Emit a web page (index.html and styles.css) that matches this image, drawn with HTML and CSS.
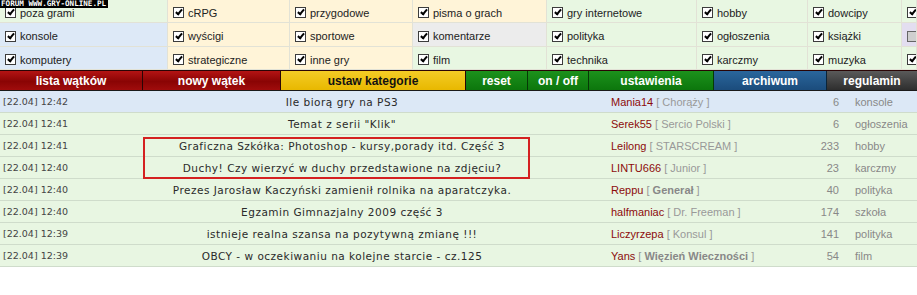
FILE: index.html
```html
<!DOCTYPE html>
<html lang="pl">

<head>
  <meta charset="UTF-8">
  <title>Forum - lista wątków</title>
  <link rel="stylesheet" href="styles.css">
</head>

<body>

  <div class="watermark">FORUM WWW.GRY-ONLINE.PL</div>

  <div class="cats">
    <label class="cat green"><span class="cb"></span>poza grami</label>
    <label class="cat cream"><span class="cb"></span>cRPG</label>
    <label class="cat cream"><span class="cb"></span>przygodowe</label>
    <label class="cat cream"><span class="cb"></span>pisma o grach</label>
    <label class="cat green"><span class="cb"></span>gry internetowe</label>
    <label class="cat green"><span class="cb"></span>hobby</label>
    <label class="cat green"><span class="cb"></span>dowcipy</label>
    <label class="cat green"><span class="cb"></span></label>

    <label class="cat blue"><span class="cb"></span>konsole</label>
    <label class="cat cream"><span class="cb"></span>wyścigi</label>
    <label class="cat cream"><span class="cb"></span>sportowe</label>
    <label class="cat gray"><span class="cb"></span>komentarze</label>
    <label class="cat green"><span class="cb"></span>polityka</label>
    <label class="cat green"><span class="cb"></span>ogłoszenia</label>
    <label class="cat green"><span class="cb"></span>książki</label>
    <label class="cat lilac"><span class="cb off"></span></label>

    <label class="cat blue"><span class="cb"></span>komputery</label>
    <label class="cat cream"><span class="cb"></span>strategiczne</label>
    <label class="cat cream"><span class="cb"></span>inne gry</label>
    <label class="cat green"><span class="cb"></span>film</label>
    <label class="cat green"><span class="cb"></span>technika</label>
    <label class="cat green"><span class="cb"></span>karczmy</label>
    <label class="cat green"><span class="cb"></span>muzyka</label>
    <label class="cat green"><span class="cb"></span></label>
  </div>

  <nav class="menu">
    <a href="#" class="red">lista wątków</a>
    <a href="#" class="red">nowy wątek</a>
    <a href="#" class="yellow">ustaw kategorie</a>
    <a href="#" class="grn">reset</a>
    <a href="#" class="grn">on / off</a>
    <a href="#" class="grn">ustawienia</a>
    <a href="#" class="navy">archiwum</a>
    <a href="#" class="dark">regulamin</a>
  </nav>

  <div class="threads">
    <div class="row first">
      <span class="date">[22.04] 12:42</span>
      <a href="#" class="title">Ile biorą gry na PS3</a>
      <span class="author"><a href="#">Mania14</a> [ Chorąży ]</span>
      <span class="count">6</span>
      <span class="section">konsole</span>
    </div>
    <div class="row">
      <span class="date">[22.04] 12:41</span>
      <a href="#" class="title">Temat z serii "Klik"</a>
      <span class="author"><a href="#">Serek55</a> [ Sercio Polski ]</span>
      <span class="count">6</span>
      <span class="section">ogłoszenia</span>
    </div>
    <div class="row">
      <span class="date">[22.04] 12:41</span>
      <a href="#" class="title">Graficzna Szkółka: Photoshop - kursy,porady itd. Część 3</a>
      <span class="author"><a href="#">Leilong</a> [ STARSCREAM ]</span>
      <span class="count">233</span>
      <span class="section">hobby</span>
    </div>
    <div class="row">
      <span class="date">[22.04] 12:40</span>
      <a href="#" class="title">Duchy! Czy wierzyć w duchy przedstawione na zdjęciu?</a>
      <span class="author"><a href="#">LINTU666</a> [ Junior ]</span>
      <span class="count">23</span>
      <span class="section">karczmy</span>
    </div>
    <div class="row">
      <span class="date">[22.04] 12:40</span>
      <a href="#" class="title">Prezes Jarosław Kaczyński zamienił rolnika na aparatczyka.</a>
      <span class="author"><a href="#">Reppu</a> [ <b>Generał</b> ]</span>
      <span class="count">40</span>
      <span class="section">polityka</span>
    </div>
    <div class="row">
      <span class="date">[22.04] 12:40</span>
      <a href="#" class="title">Egzamin Gimnazjalny 2009 część 3</a>
      <span class="author"><a href="#">halfmaniac</a> [ Dr. Freeman ]</span>
      <span class="count">174</span>
      <span class="section">szkoła</span>
    </div>
    <div class="row">
      <span class="date">[22.04] 12:39</span>
      <a href="#" class="title">istnieje realna szansa na pozytywną zmianę !!!</a>
      <span class="author"><a href="#">Liczyrzepa</a> [ Konsul ]</span>
      <span class="count">141</span>
      <span class="section">polityka</span>
    </div>
    <div class="row">
      <span class="date">[22.04] 12:39</span>
      <a href="#" class="title">OBCY - w oczekiwaniu na kolejne starcie - cz.125</a>
      <span class="author"><a href="#">Yans</a> [ <b>Więzień Wieczności</b> ]</span>
      <span class="count">54</span>
      <span class="section">film</span>
    </div>
  </div>

  <div class="highlight"></div>

</body>

</html>
```

FILE: styles.css
```css
body {
  margin: 0;
  padding: 0;
  background-color: #fff;
  font-family: "Liberation Sans", Arial, sans-serif;
  color: #222;
  position: relative;
}

.watermark {
  position: absolute;
  top: 0;
  left: 0;
  z-index: 2;
  background-color: #000;
  color: #fff;
  font-family: "DejaVu Sans Mono", monospace;
  font-weight: bold;
  font-size: 7.6px;
  line-height: 8px;
  height: 8px;
  padding: 0 2px 0 1px;
}

.cats {
  display: grid;
  grid-template-columns: 168px 122px 123px 134px 150px 111px 94px 15px;
  grid-template-rows: 23px 24px 23px;
}
.cat {
  display: flex;
  align-items: center;
  gap: 4px;
  padding: 3px 0 0 5px;
  font-size: 11px;
  border-right: 1px solid #e2e2d6;
  border-bottom: 1px solid #e2e2d6;
  box-sizing: border-box;
  white-space: nowrap;
  overflow: hidden;
}
.green { background-color: #e8f7e2; }
.cream { background-color: #fff4d8; }
.blue { background-color: #dde9f7; }
.gray { background-color: #ececec; }
.lilac { background-color: #e3def0; }

.cb {
  position: relative;
  flex: none;
  width: 11px;
  height: 11px;
  box-sizing: border-box;
  border: 1px solid #3c3c3c;
  background-color: #fff;
}
.cb::after {
  content: "";
  position: absolute;
  left: 3px;
  top: 0;
  width: 2px;
  height: 5px;
  border: solid #000;
  border-width: 0 2px 2px 0;
  transform: rotate(40deg);
}
.cb.off {
  background-color: #cfcfcf;
  border-color: #666;
}
.cb.off::after {
  display: none;
}

.menu {
  display: grid;
  grid-template-columns: 143px 138px 185px 62px 61px 125px 113px 90px;
  height: 21px;
  box-sizing: border-box;
  border-top: 1px solid #2a0505;
  border-bottom: 1px solid #1a1a1a;
}
.menu a {
  display: flex;
  align-items: center;
  justify-content: center;
  color: #fff;
  font-weight: bold;
  font-size: 12px;
  text-decoration: none;
  border-right: 1px solid #2a0505;
}
.menu a:last-child {
  border-right: none;
}
.menu .red { background: linear-gradient(#b41414, #8a0404 55%, #a00c0c); }
.menu .yellow { background: linear-gradient(#f4cc26, #e8b800); color: #111; }
.menu .grn { background: linear-gradient(#1c921c, #0c760c); border-right-color: #063806; }
.menu .navy { background: linear-gradient(#2a669c, #1b4c7c); border-right-color: #0a2438; }
.menu .dark { background: linear-gradient(#5a5a5a, #2e2e2e); }

.threads {
  font-size: 11px;
}
.row {
  display: grid;
  grid-template-columns: 76px 532px 190px 41px 1fr;
  align-items: center;
  height: 22px;
  box-sizing: border-box;
  border-bottom: 1px solid #cfdccb;
  background-color: #e8f6e2;
}
.row.first {
  background-color: #dce8f6;
}
.date {
  padding-left: 3px;
  font-family: "DejaVu Sans", Verdana, sans-serif;
  font-size: 9.5px;
  color: #444;
}
.title {
  text-align: center;
  font-family: "DejaVu Sans", Verdana, sans-serif;
  font-size: 10.5px;
  letter-spacing: 0.5px;
  color: #2a2a2a;
  text-decoration: none;
}
.author {
  padding-left: 3px;
  color: #999;
  white-space: nowrap;
}
.author a {
  color: #8c0b0b;
  text-decoration: none;
}
.author b {
  color: #888;
}
.count {
  text-align: right;
  color: #888;
}
.section {
  padding-left: 16px;
  color: #888;
}

.highlight {
  position: absolute;
  left: 143px;
  top: 137px;
  width: 387px;
  height: 42px;
  box-sizing: border-box;
  border: 2px solid #d42121;
}
```
